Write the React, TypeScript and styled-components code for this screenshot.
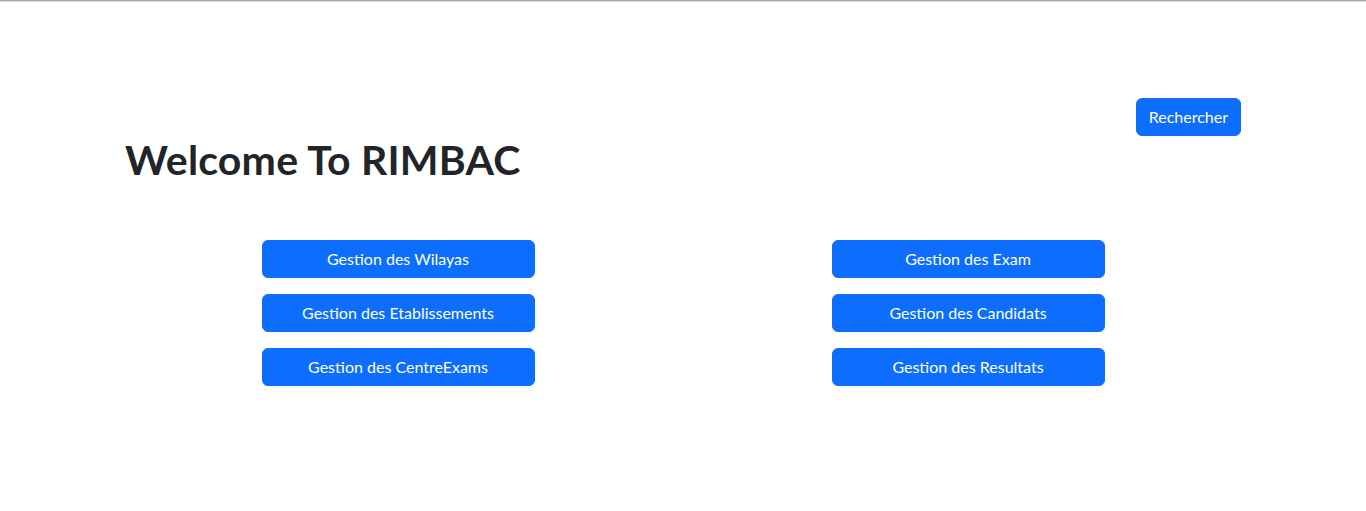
import React from "react";
import styled, { createGlobalStyle } from "styled-components";

const GlobalStyle = createGlobalStyle`
  html, body { margin: 0; padding: 0; background: #fff; }
  body {
    font-family: Lato, "Noto Sans", "Liberation Sans", sans-serif;
    color: #212529;
    border-top: 1px solid #a9a9a9;
    box-shadow: inset 0 1px 0 #dcdcdc;
  }
`;

const Container = styled.div`
  width: 1116px;
  margin: 0 auto;
  padding: 97px 12px 0;
`;

const TopBar = styled.div`
  display: flex;
  justify-content: flex-end;
`;

const Button = styled.button<{ $wide?: boolean }>`
  display: inline-flex;
  align-items: center;
  justify-content: center;
  box-sizing: border-box;
  height: 38px;
  padding: 0 12px;
  width: ${(p) => (p.$wide ? "273px" : "auto")};
  min-width: ${(p) => (p.$wide ? "273px" : "104px")};
  border: 1px solid #0d6efd;
  border-radius: 6px;
  background: #0d6efd;
  color: #fff;
  font-family: inherit;
  font-size: 16px;
  line-height: 24px;
  cursor: pointer;
`;

const Title = styled.h1`
  margin: 0;
  font-size: 41px;
  line-height: 48px;
  font-weight: 700;
  letter-spacing: 0.2px;
`;

const Grid = styled.div`
  display: grid;
  grid-template-columns: 1fr 1fr;
  margin: 56px -12px 0;
`;

const Column = styled.div`
  display: flex;
  flex-direction: column;
  align-items: center;
  gap: 16px;
  padding: 0 12px;
`;

const left = ["Gestion des Wilayas", "Gestion des Etablissements", "Gestion des CentreExams"];
const right = ["Gestion des Exam", "Gestion des Candidats", "Gestion des Resultats"];

export default function App() {
  return (
    <>
      <GlobalStyle />
      <Container>
        <TopBar>
          <Button>Rechercher</Button>
        </TopBar>
        <Title>Welcome To RIMBAC</Title>
        <Grid>
          <Column>
            {left.map((t) => (
              <Button $wide key={t}>{t}</Button>
            ))}
          </Column>
          <Column>
            {right.map((t) => (
              <Button $wide key={t}>{t}</Button>
            ))}
          </Column>
        </Grid>
      </Container>
    </>
  );
}
